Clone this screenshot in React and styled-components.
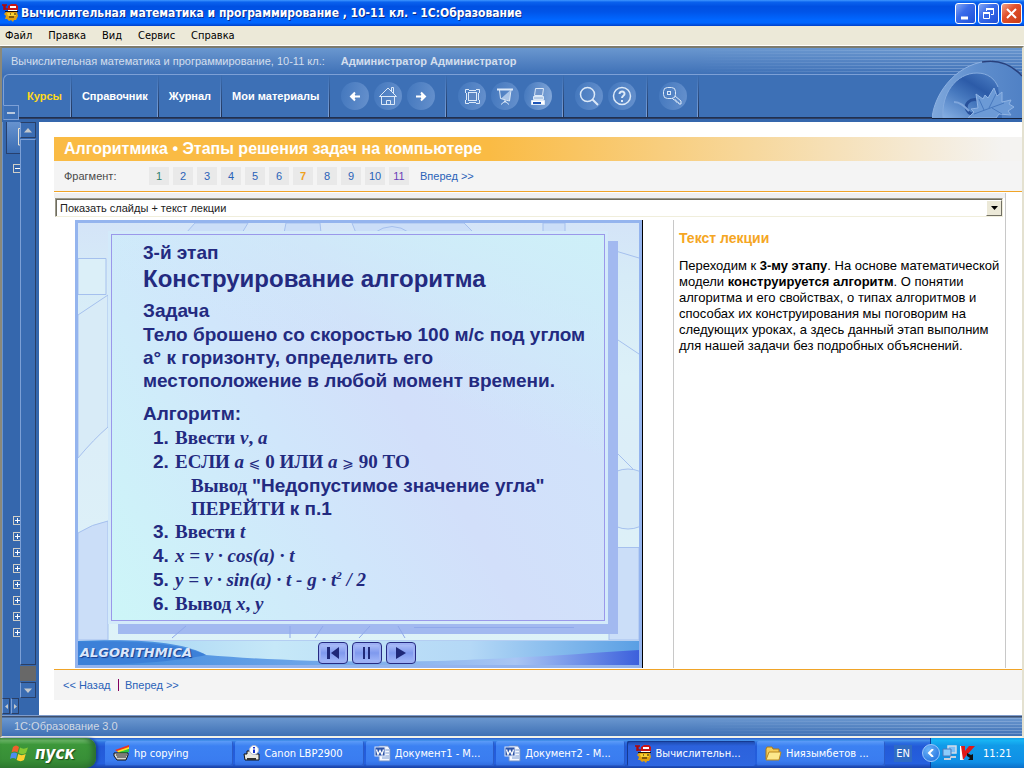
import React from "react";
import styled, { createGlobalStyle, css } from "styled-components";

const tahoma = `"DejaVu Sans Condensed", "DejaVu Sans", sans-serif`;
const arial = `"Liberation Sans", Arial, sans-serif`;
const times = `"Liberation Serif", "Times New Roman", serif`;

const GlobalStyle = createGlobalStyle`
  *, *::before, *::after { box-sizing: border-box; }
  body { margin: 0; background: #fff; font: 11px ${arial}; }
  button { font: inherit; color: inherit; padding: 0; border: 0; background: none; cursor: pointer; }
  a { text-decoration: none; }
  ul, ol { list-style: none; margin: 0; padding: 0; }
  h1, h2, h3, p { margin: 0; }
  svg { display: block; }
`;

const Screen = styled.div`
  min-height: 100vh;
  display: flex;
  flex-direction: column;
`;

/* Window chrome */
const TitleBar = styled.header`
  height: 26px;
  display: flex;
  align-items: center;
  gap: 2px;
  padding: 0 2px;
  color: #fff;
  background: linear-gradient(#3f97ff 0, #0a62ee 8%, #0050e2 25%, #0054e8 45%, #0066ff 75%, #0066ff 88%, #0040c8 100%);
`;
const WindowTitle = styled.h1`
  flex: 1;
  font: bold 12px ${tahoma};
  text-shadow: 1px 1px 0 #0a2a8c;
  white-space: nowrap;
`;
const WindowButton = styled.button`
  width: 21px;
  height: 21px;
  display: grid;
  place-items: center;
  border: 1px solid #fff;
  border-radius: 3px;
  background: ${(p) =>
    p.$close
      ? "linear-gradient(135deg, #f0a48c, #e2502c 40%, #c83c14)"
      : "linear-gradient(135deg, #86a8f4, #3a6cea 40%, #1e50d8)"};
`;
const MenuBar = styled.nav`
  height: 20px;
  display: flex;
  align-items: center;
  gap: 16px;
  padding: 0 5px;
  background: #ece9d8;
  border-bottom: 1px solid #fff;
  font: 11px ${tahoma};
  color: #000;
`;

/* Application frame */
const Frame = styled.div`
  flex: 1;
  display: flex;
  flex-direction: column;
  border-top: 2px solid #7d7b6c;
  border-left: 2px solid #8b897a;
  border-right: 2px solid #e4e1d0;
  border-bottom: 2px solid #f4f2e8;
`;
const Header = styled.div`
  position: relative;
  background: #3d70b6;
  border-bottom: 3px solid #3567ad;
`;
const stripes = css`
  &::after {
    content: "";
    position: absolute;
    inset: 0;
    background: repeating-linear-gradient(transparent 0 2px, #a9c3e6 2px 3px);
    opacity: 0.4;
    mask-image: linear-gradient(90deg, transparent 68%, #000 92%);
  }
`;
const CourseStrip = styled.div`
  position: relative;
  height: 26px;
  display: flex;
  align-items: center;
  gap: 16px;
  padding: 0 9px;
  color: #d3deed;
  background: linear-gradient(#6a97cf, #3f71b7);
  ${stripes}
`;
const TabRow = styled.div`
  display: flex;
  height: 45px;
  margin-left: 1px;
  border-top: 1px solid #7da0d6;
  border-left: 1px solid #7da0d6;
  border-bottom: 1px solid #2f3f63;
  border-top-left-radius: 6px;
`;
const Cell = styled.div`
  display: flex;
  align-items: center;
  gap: 5px;
  padding: 0 ${(p) => p.$end}px 0 ${(p) => p.$start}px;
  border-right: 1px solid;
  border-image: linear-gradient(#3d70b6, #1f2f50) 1;
  border-bottom: 1px solid #7da0d6;
  flex: ${(p) => (p.$fill ? "1" : "none")};
  background: linear-gradient(#3d70b6, #7da0d6) right / 1px 100% no-repeat;
`;
const TabButton = styled.button`
  color: ${(p) => (p.$active ? "#ffd91c" : "#fff")};
  font-weight: bold;
  white-space: nowrap;
`;
const ToolButton = styled.button`
  width: 28px;
  height: 28px;
  border-radius: 50%;
  display: grid;
  place-items: center;
  background: linear-gradient(100deg, #4377bd, ${(p) => (p.$bright ? "#86aadb" : "#6691cd")});
`;
const HeaderArt = styled.svg`
  position: absolute;
  right: 0;
  bottom: 0;
`;
const CollapseButton = styled.button`
  position: absolute;
  left: 1px;
  bottom: -1px;
  width: 16px;
  height: 15px;
  border: 1px solid #7da0d6;
  border-left-color: #4f7fc2;
  background: #3d70b6;
  display: grid;
  place-items: center;
  &::before { content: ""; width: 8px; height: 2px; background: #b9c9de; }
`;

const Main = styled.div`
  flex: 1;
  display: flex;
`;
const Sidebar = styled.aside`
  width: 37px;
  flex: none;
  display: flex;
  flex-direction: column;
  background: #3567ad;
`;
const SidebarBody = styled.div`
  flex: 1;
  display: flex;
`;
const Tree = styled.div`
  width: 18px;
  display: flex;
  flex-direction: column;
  gap: 10px;
  overflow: hidden;
  border-left: 1px solid #6b94cd;
`;
const TreeHead = styled.div`
  height: 32px;
  margin-left: 3px;
  border-bottom: 1px solid #27406e;
  border-left: 1px solid #27406e;
  background: linear-gradient(#6793cf, #3b6db3);
  padding: 6px 0 0 10px;
`;
const TreeNode = styled.button`
  width: 9px;
  height: 9px;
  margin-left: 10px;
  border: 1px solid #d0cfc8;
  position: relative;
  &::before { content: ""; position: absolute; left: 1px; right: 1px; top: 3px; height: 1px; background: #fff; }
  &::after { content: ""; position: absolute; top: 1px; bottom: 1px; left: 3px; width: ${(p) => (p.$open ? 0 : 1)}px; background: #fff; }
`;
const TreeBranches = styled.div`
  margin-top: auto;
  padding-bottom: 61px;
  display: flex;
  flex-direction: column;
  gap: 7px;
`;
const ScrollColumn = styled.div`
  width: 16px;
  display: flex;
  flex-direction: column;
  gap: 1px;
`;
const ScrollPiece = styled.button`
  height: 16px;
  flex: ${(p) => (p.$grow ? "1" : "none")};
  width: ${(p) => (p.$narrow ? "8px" : "16px")};
  display: grid;
  place-items: center;
  background: #3a6cb2;
  border: 1px solid #2a3f66;
  border-top-color: ${(p) => (p.$grow ? "#7da0d6" : "#2a3f66")};
  border-left-color: #7da0d6;
`;
const ScrollTrack = styled.div`
  height: 15px;
  background: #686868;
`;
const SidebarFoot = styled.div`
  display: flex;
  gap: 1px;
  padding-bottom: 1px;
`;

/* Lesson page */
const Page = styled.main`
  flex: 1;
  min-width: 0;
  background: #fff;
  padding: 15px 0 15px 15px;
`;
const LessonTitle = styled.h2`
  height: 24px;
  padding-left: 10px;
  font: bold 16px/23px ${arial};
  color: #fff;
  background: linear-gradient(90deg, #fabb44 45%, #f4f3f1 98%);
`;
const FragmentRow = styled.nav`
  height: 31px;
  display: flex;
  align-items: center;
  padding-left: 10px;
  background: #f4f4f4;
  border-bottom: 1px solid #f0a428;
  color: #4a4a4a;
`;
const FragmentLabel = styled.span`
  width: 85px;
`;
const FragmentList = styled.ul`
  display: flex;
  gap: 4px;
  margin-right: 11px;
`;
const FragmentLink = styled.a`
  display: block;
  width: 20px;
  text-align: center;
  line-height: 18px;
  background: #e9e9e9;
  color: ${(p) => p.$color || "#2a62b8"};
  font-weight: ${(p) => (p.$current ? "bold" : "normal")};
`;
const PageLink = styled.a`
  color: #2a62b8;
`;
const Viewer = styled.section`
  margin: 1px 16px 1px 0;
  border-right: 1px solid #c8c8c8;
`;
const ModeBar = styled.div`
  padding: 5px 2px 0 1px;
  background: linear-gradient(#f0f0f0 5px, #fff 5px);
  margin-bottom: 3px;
`;
const ModeBox = styled.div`
  position: relative;
  border: 1px solid;
  border-color: #9c9a8c #f0eedc #f0eedc #9c9a8c;
`;
const ModeSelect = styled.select`
  appearance: none;
  display: block;
  width: 100%;
  height: 17px;
  padding: 0 3px;
  border: 1px solid #6f6d60;
  border-right: 0;
  border-bottom: 0;
  border-radius: 0;
  background: #fff;
  color: #222;
  font: 11px/15px ${arial};
`;
const ModeArrow = styled.span`
  position: absolute;
  top: 1px;
  right: 0;
  width: 16px;
  height: 16px;
  display: grid;
  place-items: center;
  background: #ece9d8;
  border: 1px solid;
  border-color: #fff #716f64 #716f64 #fff;
  pointer-events: none;
`;
const Columns = styled.div`
  display: grid;
  grid-template-columns: auto 1fr;
  column-gap: 31px;
  padding-left: 21px;
`;
const Lecture = styled.article`
  border-left: 1px solid #c8c8c8;
  padding: 10px 4px 0 5px;
  font: 13px/16px ${arial};
  color: #000;
`;
const LectureTitle = styled.h3`
  font: bold 14px/16px ${arial};
  color: #f5a623;
  margin-bottom: 12px;
`;
const PageFoot = styled.nav`
  height: 31px;
  display: flex;
  align-items: center;
  padding-left: 9px;
  border-top: 1px solid #f0a428;
  background: #f4f4f4;
`;
const BackLink = styled(PageLink)`
  width: 55px;
`;
const Divider = styled.span`
  width: 1px;
  height: 12px;
  margin-right: 6px;
  background: #800060;
`;

/* Slide */
const Slide = styled.section`
  position: relative;
  width: 567px;
  border: 3px solid #94b4ee;
  box-shadow: 1px 0 0 #000;
  color: #232a80;
  font: bold 19px/24px ${arial};
`;
const SlideArt = styled.svg`
  position: absolute;
  inset: 0;
  width: 100%;
  height: 100%;
`;
const Card = styled.div`
  position: relative;
  margin: 11px 34px 19px 33px;
  height: 387px;
  padding: 6px 0 0 31px;
  border: 1px solid #9a98ea;
  box-shadow: 0 0 0 3px #d3eafa, 10px 10px 0 3px #a2b9f0;
  background:
    linear-gradient(200deg, #cef0f8 0, #cef0f800 40%),
    linear-gradient(60deg, #cdf6f8 0, #d0e6fb 38%, #d2dffa 58%, #d0e5fb 100%);
`;
const CardShadowLines = styled.svg`
  position: absolute;
  left: 6px;
  top: 388px;
  width: 494px;
  height: 16px;
  pointer-events: none;
`;
const SlideTitle = styled.h3`
  font: bold 24px/28px ${arial};
  margin-bottom: 6px;
`;
const Problem = styled.p`
  line-height: 23px;
  margin-bottom: 10px;
`;
const Steps = styled.ol`
  padding-left: 10px;
`;
const Step = styled.li`
  display: flex;
  font-family: ${times};
`;
const StepNumber = styled.span`
  width: 22px;
  font-family: ${arial};
`;
const SubStep = styled.div`
  padding-left: 16px;
  line-height: 23px;
`;
const Sans = styled.span`
  font-family: ${arial};
`;
const Relation = styled.span`
  font: 14px/1 "DejaVu Sans", sans-serif;
`;
const Power = styled.sup`
  font-size: 11px;
  line-height: 0;
`;
const Player = styled.div`
  position: relative;
  height: 25px;
  display: flex;
  align-items: center;
  padding-left: 2px;
`;
const Brand = styled.span`
  width: 238px;
  font: italic bold 13px/24px "DejaVu Sans", sans-serif;
  color: #dbe7fb;
  text-shadow: 1px 1px 1px #16398c;
`;
const Controls = styled.div`
  display: flex;
  gap: 4px;
`;
const PlayerButton = styled.button`
  width: 30px;
  height: 22px;
  display: grid;
  place-items: center;
  border: 1px solid #262a82;
  border-radius: 4px;
  background: linear-gradient(#b4c4fa, #7f99ee 50%, #a6bbfa);
  box-shadow: inset 0 0 0 2px #9db0f4;
`;

const StatusBar = styled.footer`
  position: relative;
  height: 21px;
  padding-left: 12px;
  line-height: 20px;
  color: #d0d8e4;
  border-top: 1px solid #7f9ccb;
  background: linear-gradient(#3e4f6c 1px, #6a97cf 2px, #3f70b5);
  ${stripes}
`;

/* Desktop task bar */
const TaskBar = styled.footer`
  height: 30px;
  display: flex;
  color: #fff;
  font: 11px ${tahoma};
  background: linear-gradient(#2a5fd0 0, #4490ea 8%, #2c6ee0 16%, #235ad8 28%, #2560de 85%, #1941a5 100%);
`;
const StartButton = styled.button`
  width: 96px;
  display: flex;
  align-items: center;
  gap: 6px;
  padding-left: 10px;
  margin-right: 9px;
  border-radius: 0 10px 10px 0;
  font: italic bold 17px ${tahoma};
  text-shadow: 1px 1px 1px #1a4a1a;
  background: linear-gradient(#4f9c4d 0, #6cb868 8%, #3c973a 22%, #388f37 70%, #2f7d30 100%);
  box-shadow: inset -4px 0 5px #2c6f30, 2px 0 3px #163f9c;
`;
const TaskList = styled.div`
  flex: 1;
  min-width: 0;
  display: flex;
  gap: 2px;
  padding: 3px 0 2px;
`;
const TaskButton = styled.button`
  flex: 1 1 0;
  min-width: 0;
  display: flex;
  align-items: center;
  gap: 4px;
  padding: 0 8px;
  text-align: left;
  border-radius: 2px;
  background: ${(p) =>
    p.$active
      ? "linear-gradient(#1c48a8, #2c62dc 20%, #2e66e0)"
      : "linear-gradient(#5c9cf8, #3c81f2 20%, #3a7cf0 80%, #2f6ade)"};
  box-shadow: inset ${(p) => (p.$active ? "1px 1px 0 #153a92" : "-1px -1px 0 #2a5cc8")};
`;
const TaskLabel = styled.span`
  white-space: nowrap;
  overflow: hidden;
  text-overflow: ellipsis;
`;
const Language = styled.span`
  align-self: center;
  margin: 0 18px 0 9px;
  padding: 2px;
  background: #2f6bc4;
`;
const Tray = styled.div`
  width: 94px;
  display: flex;
  align-items: center;
  gap: 2px;
  border-left: 1px solid #0b3e9c;
  background: linear-gradient(#139ee9 0, #18b4f4 8%, #119be8 25%, #0f8fe6 80%, #0c6fc8 100%);
`;
const TrayToggle = styled.button`
  width: 18px;
  height: 18px;
  margin-left: -9px;
  display: grid;
  place-items: center;
  border: 1px solid #9cc8fa;
  border-radius: 50%;
  background: radial-gradient(circle at 35% 30%, #6cb4f8, #1668dc);
`;
const Clock = styled.time`
  margin-left: 6px;
`;

const MascotIcon = () => (
  <svg width="17" height="18" viewBox="0 0 17 18" aria-hidden="true">
    <path d="M4 8h11l1 4-2 4h-2l-1 2-2-2-2 1-2-2H3l1-3-2-2z" fill="#e0a010" />
    <path d="M5 9h9v3H6z" fill="#f8d030" />
    <path d="M6 2l3-2h5l2 2v4H6z" fill="#c81414" />
    <path d="M8 2h6v2H8zM6 6h9v1H6z" fill="#fff" />
    <path d="M3 7.500h13M8 10h1M12 10h2M7 13h5" stroke="#201008" />
    <path d="M0 1h2v5M5 1H3v4h3" fill="none" stroke="#b00808" strokeWidth="1.4" />
  </svg>
);

const toolIcons = {
  back: <path d="M19 14.5H10M14 10.5l-4 4 4 4M13 12.5v4" strokeWidth="2" />,
  forward: <path d="M9 14.5h9M14 10.5l4 4-4 4M15 12.5v4" strokeWidth="2" />,
  home: (
    <>
      <path d="M5.500 14.500L14 6l8.500 8.500zM17.500 9V5.500h2V11M7.500 15v7.500h13V15" />
      <path d="M12.500 22.500v-4h4v4" />
    </>
  ),
  fit: (
    <>
      <rect x="10.500" y="10.500" width="8" height="8" fill="#5c86c2" />
      <path d="M7.500 11V7.500H11M18 7.500h3.500V11M21.500 18v3.500H18M11 21.500H7.500V18" />
      <path d="M11 8.500h7M20.500 11v7M18 20.500h-7M8.500 18v-7" />
    </>
  ),
  board: (
    <>
      <path d="M10 16.500l9-8v10z" fill="#a9c4e8" stroke="none" />
      <path d="M6 7.500h16" strokeWidth="2" />
      <path d="M8.500 8l1 8.500 9 2.500 1.500-11" />
      <path d="M14 18v3M10 22.500l4-3.500 4 3.500" />
    </>
  ),
  print: (
    <>
      <path d="M10.500 13.500l1-7h8l-1 7z" fill="#6f95cc" />
      <path d="M9.500 14.500h10v3h-10z" fill="#b4cbe8" />
      <path d="M7.500 18.500h13v4h-13z" fill="#fff" />
      <path d="M9 21h8" stroke="#1c54b8" strokeWidth="2" />
    </>
  ),
  search: (
    <>
      <circle cx="12.500" cy="12.500" r="7" strokeWidth="1.500" />
      <path d="M17.500 17.500l5.500 5.500" strokeWidth="2" />
    </>
  ),
  help: (
    <>
      <circle cx="14" cy="14" r="8.500" strokeWidth="1.500" />
      <path d="M11.500 12c0-3.500 5.500-3 5 0 0 1.800-2.500 1.800-2.500 4M14 18v2" strokeWidth="2" />
    </>
  ),
  key: (
    <>
      <rect x="4.500" y="5.500" width="12" height="11" rx="4" />
      <rect x="8.500" y="9.500" width="3" height="3" />
      <path d="M16 14l6 5v3h-2l-1-2h-2v-2h-2l-2-2" />
    </>
  ),
};

const Tool = ({ name, label, bright }) => (
  <ToolButton type="button" aria-label={label} $bright={bright}>
    <svg width="28" height="28" viewBox="0 0 28 28" fill="none" stroke={/back|forward/.test(name) ? "#fff" : "#dce9f8"}>
      {toolIcons[name]}
    </svg>
  </ToolButton>
);

const Chevron = ({ d, w = 8, h = 5, fill = "#c4c8cc" }) => (
  <svg width={w} height={h} viewBox={`0 0 ${w} ${h}`} aria-hidden="true">
    <path d={d} fill={fill} />
  </svg>
);

const LeafArt = () => (
  <HeaderArt width="90" height="59" viewBox="0 0 90 59" aria-hidden="true">
    <defs>
      <linearGradient id="ring" x1="0" y1="0" x2="1" y2="0">
        <stop offset="0" stopColor="#7fa8dc" />
        <stop offset=".5" stopColor="#5f8ecd" />
        <stop offset="1" stopColor="#5081c5" />
      </linearGradient>
      <linearGradient id="bowl" x1="0" y1="1" x2=".8" y2="0">
        <stop offset="0" stopColor="#86b0e4" />
        <stop offset=".45" stopColor="#4678be" />
        <stop offset=".7" stopColor="#2c5ba8" />
        <stop offset="1" stopColor="#4a7cc2" />
      </linearGradient>
    </defs>
    <path d="M0 58C3 30 28 1 60 1c14 0 22 5 30 14v44H0z" fill="url(#ring)" />
    <path d="M0 58C3 30 28 1 60 1" fill="none" stroke="#8db1e2" />
    <path d="M50 2c16-3 30 3 40 14" fill="none" stroke="#28407c" strokeWidth="1.500" />
    <path d="M11 58C9 34 24 13 45 13c11 0 18 6 21 14l4 31z" fill="url(#bowl)" />
    <path d="M11 58C9 34 24 13 45 13c11 0 18 6 21 14" fill="none" stroke="#86acdf" />
    <path d="M46 40c-8-2-14 4-11 10 2 4 6 5 9 3" fill="none" stroke="#27509a" strokeWidth="3" />
    <path d="M22 42c6 0 10 4 15 9" fill="none" stroke="#7fa6dc" strokeWidth="2" />
    <path d="M36 58l6-6-3-3 7-1-2-14 7 5 2-4 3 3 6-10 3 8 5-4v10l9-2-2 4 5 3-6 4 3 4-12-1-3 4z" fill="#6c9ad6" stroke="#90b4e4" />
    <path d="M42 54l30-11M52 50l-5-11M57 48l7-14M60 48l10 6" stroke="#4778be" fill="none" />
    <path d="M0 58.500h90" stroke="#16223c" />
  </HeaderArt>
);

const SlideBackdrop = () => (
  <SlideArt viewBox="0 0 561 442" preserveAspectRatio="none" aria-hidden="true">
    <defs>
      <linearGradient id="sky" x1="0" y1="0" x2="0" y2="1">
        <stop offset="0" stopColor="#d4e4f8" />
        <stop offset=".12" stopColor="#d6ebf7" />
        <stop offset=".35" stopColor="#dcf0f8" />
        <stop offset=".5" stopColor="#dceef8" />
        <stop offset="1" stopColor="#def3f8" />
      </linearGradient>
      <linearGradient id="floor" x1="0" y1="0" x2="1" y2="0">
        <stop offset="0" stopColor="#9fd0f2" />
        <stop offset=".35" stopColor="#c6e8f8" />
        <stop offset=".7" stopColor="#b4d8f6" />
        <stop offset="1" stopColor="#5a9fe4" />
      </linearGradient>
      <linearGradient id="wave" x1="0" y1="0" x2="1" y2="0">
        <stop offset="0" stopColor="#3c88dc" />
        <stop offset=".4" stopColor="#6ba4e8" />
        <stop offset=".78" stopColor="#a9c6f4" />
        <stop offset="1" stopColor="#3c60dc" />
      </linearGradient>
    </defs>
    <rect width="561" height="442" fill="url(#sky)" />
    <g fill="#cbdef8" stroke="#a5c0ee">
      <path d="M108 10l9-10h53l-6 10zM206 10l2-10h34l1 10zM274 0h112l10 10H278zM465 0h22v10h-22z" />
      <path d="M0 35.500h28v36H0z" fill="#dbeff8" />
      <path d="M0 92l30-20v132q-14 12-30 31z" fill="#d8ebf7" />
      <path d="M0 310q14-9 30-12v119H0z" />
      <path d="M531 324.500h30V417h-30z" />
      <ellipse cx="550" cy="276" rx="30" ry="30" fill="#d6e9f7" />
      <path d="M531 26l30 9M531 111l30 20M531 222l24 24M296 10q18-13 36 0" fill="none" />
    </g>
    <rect y="417" width="561" height="25" fill="url(#floor)" />
    <path d="M0 417.500h561" stroke="#b4cef2" />
    <path d="M0 418c70-3 110 3 128 14 60 5 130 8 230 6 90-3 140-7 203-11v15H0z" fill="url(#wave)" />
    <path d="M0 419c60-2 105 2 128 13-20 5-70 10-128 10z" fill="#3c80d8" />
  </SlideArt>
);

const WordIcon = () => (
  <svg width="17" height="17" viewBox="0 0 17 17" aria-hidden="true">
    <path d="M5 1h9l2 3v12H5z" fill="#f4f8ff" stroke="#6c8cc4" />
    <path d="M11 5h4M11 8h4M8 11h7M8 13h7" stroke="#7d9cd0" />
    <rect x="1" y="2" width="10" height="9" fill="#2c54a8" stroke="#dce6f8" />
    <path d="M2.500 4.500l1.500 5 2-4 2 4 1.500-5" fill="none" stroke="#fff" strokeWidth="1.300" />
  </svg>
);
const CopyIcon = () => (
  <svg width="17" height="17" viewBox="0 0 17 17" aria-hidden="true">
    <path d="M2 5L16 0v3L5 7z" fill="#f03020" />
    <path d="M4 6l12-4v2L6 8z" fill="#f8e820" />
    <path d="M6 7l10-3v3L8 9z" fill="#30c840" />
    <path d="M1 8h14v2l-2 5H4l-3-4z" fill="#d8d8d0" stroke="#101010" />
    <path d="M3 10h11M4 12h9" stroke="#202020" />
  </svg>
);
const PrinterIcon = () => (
  <svg width="17" height="17" viewBox="0 0 17 17" aria-hidden="true">
    <path d="M1 9h3V6h8v3h4v6H2z" fill="#e8e8e0" stroke="#101010" />
    <path d="M4 13h9v2H4z" fill="#303030" />
    <circle cx="11" cy="5" r="4.500" fill="#fff" stroke="#b0b8d0" />
    <path d="M11 2v1.500M11 4.500V8" stroke="#1030d0" strokeWidth="2" />
  </svg>
);
const FolderIcon = () => (
  <svg width="17" height="15" viewBox="0 0 17 15" aria-hidden="true">
    <path d="M1 3l1-2h5l1 2h6v10H1z" fill="#f4cc58" stroke="#a87818" />
    <path d="M4 6h12l-2 8H1z" fill="#fce88c" stroke="#b88820" />
  </svg>
);
const FlagIcon = () => (
  <svg width="19" height="18" viewBox="0 0 19 18" aria-hidden="true">
    <path d="M3 3c2-2 4-2 6 0L7.500 8.500c-2-1.500-4-1.500-6 0z" fill="#f0602c" />
    <path d="M10 3.500c2 1.500 5 1.500 8 0L16 9c-2 1.500-5 1.500-7.500 0z" fill="#84c834" />
    <path d="M1.200 9.500c2-1.500 4-1.500 6 0L6 15c-2-1.500-4-1.500-6 0z" fill="#4c8cf0" />
    <path d="M8.200 10c2 1.500 5 1.500 7.500 0L14 16c-2 1.500-5 1.500-7.300 0z" fill="#fcd030" />
  </svg>
);
const NetworkIcon = () => (
  <svg width="16" height="16" viewBox="0 0 16 16" aria-hidden="true">
    <path d="M6 1h8v7H6z" fill="#7cc0f8" stroke="#d4dce8" strokeWidth="1.500" />
    <path d="M8 12h6" stroke="#c8d0dc" strokeWidth="2" />
    <path d="M1 4h8v7H1z" fill="#8cccfc" stroke="#4c78b8" />
    <path d="M2 14h7" stroke="#c8d0dc" strokeWidth="2" />
  </svg>
);
const ShieldIcon = () => (
  <svg width="15" height="15" viewBox="0 0 15 15" aria-hidden="true">
    <path d="M0 0h4v14H0z" fill="#fff" />
    <path d="M1 0h4v5l4-5h6L6 10l-3 4z" fill="#e01818" />
    <path d="M7 7l4 2 2-1v6H8l2-2-3-2z" fill="#101010" />
  </svg>
);

const tasks = [
  { label: "hp copying", icon: <CopyIcon /> },
  { label: "Canon LBP2900", icon: <PrinterIcon /> },
  { label: "Документ1 - M...", icon: <WordIcon /> },
  { label: "Документ2 - M...", icon: <WordIcon /> },
  { label: "Вычислительн...", icon: <MascotIcon />, active: true },
  { label: "Ниязымбетов ...", icon: <FolderIcon /> },
];

const fragmentColors = { 1: "#2f7f6c", 7: "#f0a01c", 11: "#6a3fb8" };

export default function App() {
  return (
    <Screen>
      <GlobalStyle />
      <TitleBar>
        <MascotIcon />
        <WindowTitle>Вычислительная математика и программирование , 10-11 кл. - 1С:Образование</WindowTitle>
        <WindowButton type="button" aria-label="Свернуть">
          <svg width="15" height="15"><path d="M3 12h7" stroke="#fff" strokeWidth="3" /></svg>
        </WindowButton>
        <WindowButton type="button" aria-label="Восстановить">
          <svg width="15" height="15" fill="none" stroke="#fff">
            <path d="M5.500 5V2.500h7v6H10" /><path d="M5 3h8" strokeWidth="2" />
            <path d="M2.500 6.500h6v6h-6z" /><path d="M2 7h7" strokeWidth="2" />
          </svg>
        </WindowButton>
        <WindowButton type="button" aria-label="Закрыть" $close>
          <svg width="15" height="15"><path d="M3 3l9 9M12 3l-9 9" stroke="#fff" strokeWidth="2" /></svg>
        </WindowButton>
      </TitleBar>
      <MenuBar>
        {["Файл", "Правка", "Вид", "Сервис", "Справка"].map((m) => (
          <button type="button" key={m}>{m}</button>
        ))}
      </MenuBar>

      <Frame>
        <Header>
          <CourseStrip>
            <span>Вычислительная математика и программирование, 10-11 кл.:</span>
            <b>Администратор Администратор</b>
          </CourseStrip>
          <TabRow>
            <Cell $start={23} $end={9}><TabButton type="button" $active>Курсы</TabButton></Cell>
            <Cell $start={10} $end={10}><TabButton type="button">Справочник</TabButton></Cell>
            <Cell $start={10} $end={10}><TabButton type="button">Журнал</TabButton></Cell>
            <Cell $start={10} $end={10}><TabButton type="button">Мои материалы</TabButton></Cell>
            <Cell $start={11} $end={11}>
              <Tool name="back" label="Назад" />
              <Tool name="home" label="Домой" />
              <Tool name="forward" label="Вперед" />
            </Cell>
            <Cell $start={11} $end={11}>
              <Tool name="fit" label="Во весь экран" />
              <Tool name="board" label="Презентация" />
              <Tool name="print" label="Печать" bright />
            </Cell>
            <Cell $start={11} $end={11}>
              <Tool name="search" label="Поиск" />
              <Tool name="help" label="Помощь" />
            </Cell>
            <Cell $start={11} $end={11}><Tool name="key" label="Доступ" /></Cell>
            <Cell $start={0} $end={0} $fill />
          </TabRow>
          <LeafArt />
          <CollapseButton type="button" aria-label="Свернуть панель" />
        </Header>

        <Main>
          <Sidebar>
            <SidebarBody>
              <Tree>
                <TreeHead>
                  <svg width="8" height="18"><path d="M8 .5H1.500v16.500H8" fill="none" stroke="#e8e4d8" /></svg>
                </TreeHead>
                <TreeNode type="button" aria-label="Свернуть раздел" $open />
                <TreeBranches>
                  {Array.from({ length: 8 }, (_, i) => (
                    <TreeNode key={i} type="button" aria-label={`Раздел ${i + 1}`} />
                  ))}
                </TreeBranches>
              </Tree>
              <ScrollColumn>
                <ScrollPiece type="button" aria-label="Вверх"><Chevron d="M4 0l4 4.500H0z" /></ScrollPiece>
                <ScrollPiece type="button" aria-label="Прокрутка" $grow />
                <ScrollTrack />
                <ScrollPiece type="button" aria-label="Вниз"><Chevron d="M0 .5h8L4 5z" /></ScrollPiece>
              </ScrollColumn>
            </SidebarBody>
            <SidebarFoot>
              <ScrollPiece type="button" aria-label="Влево" $narrow><Chevron w={3} h={5} d="M3 0v5L0 2.500z" /></ScrollPiece>
              <ScrollPiece type="button" aria-label="Вправо" $narrow><Chevron w={3} h={5} d="M0 0v5l3-2.500z" /></ScrollPiece>
            </SidebarFoot>
          </Sidebar>

          <Page>
            <LessonTitle>Алгоритмика • Этапы решения задач на компьютере</LessonTitle>
            <FragmentRow>
              <FragmentLabel>Фрагмент:</FragmentLabel>
              <FragmentList>
                {Array.from({ length: 11 }, (_, i) => i + 1).map((n) => (
                  <li key={n}>
                    <FragmentLink href={`#${n}`} $current={n === 7} $color={fragmentColors[n]}>{n}</FragmentLink>
                  </li>
                ))}
              </FragmentList>
              <PageLink href="#next">Вперед &gt;&gt;</PageLink>
            </FragmentRow>

            <Viewer>
              <ModeBar>
                <ModeBox>
                  <ModeSelect aria-label="Режим показа">
                    <option>Показать слайды + текст лекции</option>
                  </ModeSelect>
                  <ModeArrow><Chevron w={7} h={4} d="M0 0h7L3.500 4z" fill="#000" /></ModeArrow>
                </ModeBox>
              </ModeBar>
              <Columns>
                <Slide>
                  <SlideBackdrop />
                  <Card>
                    <CardShadowLines viewBox="0 0 494 16" preserveAspectRatio="none" aria-hidden="true">
                      <path d="M68 3L54 15M172 3v12M205 3l-8 12M252 3l-11 12M280 3l7 12M296 4.500h160" fill="none" stroke="#8fa8ea" />
                    </CardShadowLines>
                    <p>3-й этап</p>
                    <SlideTitle>Конструирование алгоритма</SlideTitle>
                    <p>Задача</p>
                    <Problem>
                      Тело брошено со скоростью 100 м/с под углом<br />
                      a° к горизонту, определить его<br />
                      местоположение в любой момент времени.
                    </Problem>
                    <p>Алгоритм:</p>
                    <Steps>
                      <Step><StepNumber>1.</StepNumber><div>Ввести <i>v</i>, <i>a</i></div></Step>
                      <Step>
                        <StepNumber>2.</StepNumber>
                        <div>
                          ЕСЛИ <i>a</i> <Relation>⩽</Relation> 0 ИЛИ <i>a</i> <Relation>⩾</Relation> 90 ТО
                          <SubStep>Вывод <Sans>"Недопустимое значение угла"</Sans></SubStep>
                          <SubStep>ПЕРЕЙТИ <Sans>к п.1</Sans></SubStep>
                        </div>
                      </Step>
                      <Step><StepNumber>3.</StepNumber><div>Ввести <i>t</i></div></Step>
                      <Step><StepNumber>4.</StepNumber><i>x = v · cos(a) · t</i></Step>
                      <Step><StepNumber>5.</StepNumber><i>y = v · sin(a) · t - g · t<Power>2</Power> / 2</i></Step>
                      <Step><StepNumber>6.</StepNumber><div>Вывод <i>x</i>, <i>y</i></div></Step>
                    </Steps>
                  </Card>
                  <Player>
                    <Brand>ALGORITHMICA</Brand>
                    <Controls>
                      <PlayerButton type="button" aria-label="В начало">
                        <svg width="12" height="12"><path d="M0 0h3v12H0zM12 0v12L4 6z" fill="#1f2878" /></svg>
                      </PlayerButton>
                      <PlayerButton type="button" aria-label="Пауза">
                        <svg width="12" height="12"><path d="M2 0h2v12H2zM7 0h2v12H7z" fill="#1f2878" /></svg>
                      </PlayerButton>
                      <PlayerButton type="button" aria-label="Воспроизвести">
                        <svg width="12" height="12"><path d="M1 0l10 6-10 6z" fill="#1f2878" /></svg>
                      </PlayerButton>
                    </Controls>
                  </Player>
                </Slide>
                <Lecture>
                  <LectureTitle>Текст лекции</LectureTitle>
                  <p>
                    Переходим к <b>3-му этапу</b>. На основе математической модели <b>конструируется алгоритм</b>. О
                    понятии алгоритма и его свойствах, о типах алгоритмов и способах их конструирования мы поговорим на
                    следующих уроках, а здесь данный этап выполним для нашей задачи без подробных объяснений.
                  </p>
                </Lecture>
              </Columns>
            </Viewer>

            <PageFoot>
              <BackLink href="#prev">&lt;&lt; Назад</BackLink>
              <Divider />
              <PageLink href="#next">Вперед &gt;&gt;</PageLink>
            </PageFoot>
          </Page>
        </Main>
        <StatusBar>1С:Образование 3.0</StatusBar>
      </Frame>

      <TaskBar>
        <StartButton type="button"><FlagIcon />пуск</StartButton>
        <TaskList>
          {tasks.map((t) => (
            <TaskButton type="button" key={t.label} $active={t.active}>
              {t.icon}
              <TaskLabel>{t.label}</TaskLabel>
            </TaskButton>
          ))}
        </TaskList>
        <Language>EN</Language>
        <Tray>
          <TrayToggle type="button" aria-label="Показать значки">
            <svg width="8" height="8"><path d="M6 0L2 4l4 4" fill="none" stroke="#fff" strokeWidth="2" /></svg>
          </TrayToggle>
          <NetworkIcon />
          <ShieldIcon />
          <Clock>11:21</Clock>
        </Tray>
      </TaskBar>
    </Screen>
  );
}
